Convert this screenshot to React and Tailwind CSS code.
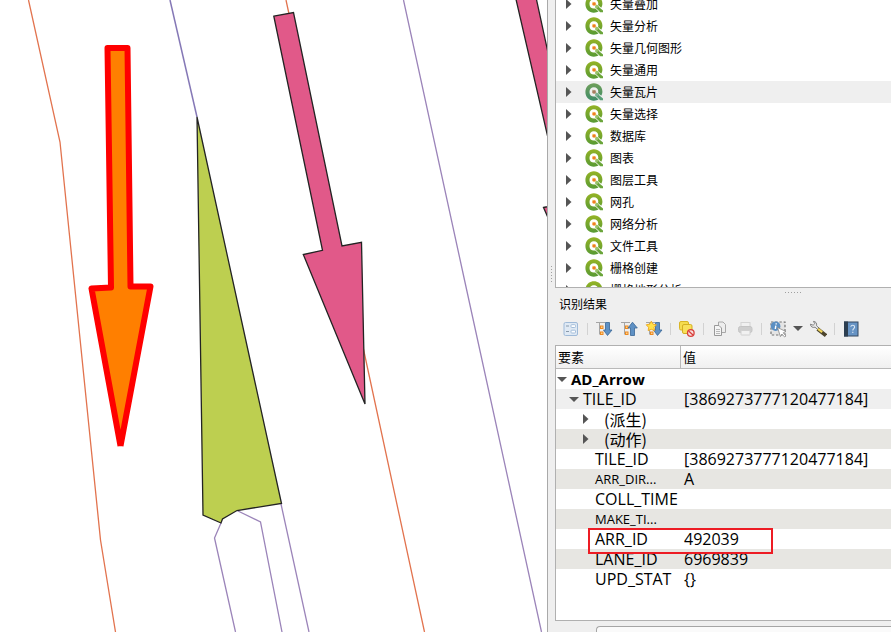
import React from "react";

const TOOLS = [
  "矢量叠加",
  "矢量分析",
  "矢量几何图形",
  "矢量通用",
  "矢量瓦片",
  "矢量选择",
  "数据库",
  "图表",
  "图层工具",
  "网孔",
  "网络分析",
  "文件工具",
  "栅格创建",
  "栅格地形分析",
];

const CJK = "font-['Noto_Sans_CJK_SC',sans-serif]";

function Collapsed() {
  return (
    <svg width="6" height="10" viewBox="0 0 6 10" aria-hidden="true">
      <path d="M0 0L5.5 5L0 10Z" fill="#555" />
    </svg>
  );
}

function Expanded() {
  return (
    <svg width="10" height="5" viewBox="0 0 10 5" aria-hidden="true">
      <path d="M0 0H10L5 5Z" fill="#555" />
    </svg>
  );
}

function QgisLogo({ muted }) {
  return (
    <svg width="18" height="18" viewBox="0 0 18 18" aria-hidden="true">
      <defs>
        <linearGradient id="ring" x1="0" y1="0" x2="0" y2="1">
          <stop offset="0" stopColor="#95b325" />
          <stop offset="1" stopColor="#589a34" />
        </linearGradient>
        <linearGradient id="ringMuted" x1="0" y1="0" x2="0" y2="1">
          <stop offset="0" stopColor="#6f9f5a" />
          <stop offset="1" stopColor="#3f8c68" />
        </linearGradient>
      </defs>
      <path
        fill={muted ? "url(#ringMuted)" : "url(#ring)"}
        d="M8.9 0.3C13.8 0.3 17.4 3.9 17.4 8.6C17.4 10.3 17 11.5 16.2 12.8L13 9.9C13.2 9.4 13.3 9 13.3 8.5C13.3 6 11.4 4.2 8.9 4.2C6.3 4.2 4.5 6 4.5 8.9C4.5 11.7 6.3 13.6 8.9 13.6C9.5 13.6 10 13.5 10.4 13.4L13.6 16.6C12.2 17.3 10.7 17.7 8.9 17.7C4 17.7 0.4 13.9 0.4 9C0.4 4.1 4 0.3 8.9 0.3Z"
      />
      <path d="M11.8 10.2L18 15.4V17.2H15.2L10.2 12.2Z" fill={muted ? "#58a078" : "#6aa53a"} />
      <path d="M10.4 9.6L12.6 9.9L14.2 11.4L11.8 13.6L10.2 12Z" fill={muted ? "#7fb193" : "#9cc26a"} />
      <path d="M7 6.8L10.6 7L11.4 9.8L9.4 11L7 10Z" fill={muted ? "#c5bd9c" : "#fbe3a0"} />
      <circle cx="9.1" cy="8.9" r="1.7" fill={muted ? "#a97b60" : "#ef7d22"} />
    </svg>
  );
}

function Icon({ children }) {
  return (
    <svg width="18" height="18" viewBox="0 0 18 18" aria-hidden="true">
      {children}
    </svg>
  );
}

function TreeLines() {
  return (
    <g>
      <path d="M1 2.5H10M4.5 3V14.5M4.5 7H6M4.5 13H6" stroke="#a5a5a5" fill="none" />
      <rect x="5.500" y="6" width="2.500" height="2.500" fill="#fbd08a" stroke="#ee8a20" />
      <rect x="5.500" y="12" width="2.500" height="2.500" fill="#fbd08a" stroke="#ee8a20" />
    </g>
  );
}

const DOWN = "M10.5 2.5H14.5V10H17L12.5 15.5L8.5 10H10.5Z";
const UP = "M10.5 15.5H14.5V8H17.3L12.5 2.2L8 8H10.5Z";

function ToolButton({ label, children }) {
  return (
    <button type="button" aria-label={label} className="flex h-6 w-[25px] items-center justify-center">
      {children}
    </button>
  );
}

function Separator() {
  return (
    <span className="flex w-2 justify-center">
      <span className="h-3 w-px bg-[#d2d2d2]" />
    </span>
  );
}

function Toolbar() {
  return (
    <div className="flex h-[33px] items-center pl-[3px]">
      <ToolButton label="表单视图">
        <Icon>
          <rect x="2" y="2.5" width="13.5" height="13" rx="1.5" fill="#dfe9f4" stroke="#9fbad8" />
          <path d="M4 6H7M4 11.5H7" stroke="#8899aa" strokeWidth="1.2" />
          <rect x="9" y="4.7" width="4.5" height="2.8" rx="0.8" fill="#fff" stroke="#a3bdd9" />
          <rect x="9" y="10.2" width="4.5" height="2.8" rx="0.8" fill="#fff" stroke="#a3bdd9" />
        </Icon>
      </ToolButton>
      <Separator />
      <ToolButton label="展开树">
        <Icon>
          <TreeLines />
          <path d={DOWN} fill="#5f91c4" stroke="#3a6797" strokeWidth="0.8" />
        </Icon>
      </ToolButton>
      <ToolButton label="折叠树">
        <Icon>
          <TreeLines />
          <path d={UP} fill="#5f91c4" stroke="#3a6797" strokeWidth="0.8" />
        </Icon>
      </ToolButton>
      <ToolButton label="默认展开新结果">
        <Icon>
          <TreeLines />
          <path d={DOWN} fill="#5f91c4" stroke="#3a6797" strokeWidth="0.8" />
          <path
            d="M6.3 1.2L8 4.2L11.4 4.8L9 7.3L9.5 10.6L6.3 9.3L3.2 10.6L3.6 7.3L1.2 4.8L4.6 4.2Z"
            fill="#ffe14a"
            stroke="#eda51b"
            strokeWidth="0.9"
          />
        </Icon>
      </ToolButton>
      <Separator />
      <ToolButton label="清除结果">
        <Icon>
          <rect x="1.5" y="1.5" width="9" height="8.500" rx="1.500" fill="#f5dc4e" stroke="#d9b526" />
          <rect x="4.5" y="4.5" width="9.500" height="9" rx="1.500" fill="#f8e05a" stroke="#d4b021" />
          <circle cx="12.8" cy="13" r="3.3" fill="#f6dedc" stroke="#d9403c" strokeWidth="1.3" />
          <path d="M10.6 11L15 15" stroke="#d9403c" strokeWidth="1.3" />
        </Icon>
      </ToolButton>
      <Separator />
      <ToolButton label="复制">
        <Icon>
          <path d="M7.5 2H12L14.5 4.5V12.5H7.5Z" fill="#ededed" stroke="#a8a8a8" />
          <path d="M3.5 5.5H8L10.5 8V15.5H3.5Z" fill="#f5f5f5" stroke="#999" />
          <path d="M5 9.5H9M5 11.5H9M5 13.5H9" stroke="#aaa" strokeWidth="0.8" />
        </Icon>
      </ToolButton>
      <ToolButton label="打印">
        <Icon>
          <rect x="5" y="2.5" width="9" height="5" fill="#f0f0f0" stroke="#d4d4d4" />
          <rect x="2.5" y="6.5" width="13.5" height="6" rx="2" fill="#cecece" stroke="#c4c4c4" />
          <rect x="5" y="10.5" width="9" height="4.5" rx="0.5" fill="#f1f1f1" stroke="#d0d0d0" />
        </Icon>
      </ToolButton>
      <Separator />
      <ToolButton label="识别要素">
        <Icon>
          <rect x="2" y="2" width="14" height="13" fill="#e4e4e4" stroke="#757575" strokeWidth="1.2" strokeDasharray="2.4 1.8" />
          <circle cx="6.6" cy="6.2" r="4.8" fill="#5c8fc2" />
          <path d="M7.2 3.2V4.4M6.8 5.6L6.3 9" stroke="#fff" strokeWidth="1.4" />
          <path d="M8.5 7.5L17 11.5L14.2 12.8L17 16L15.6 17L12.9 14L11.4 16.6Z" fill="#fff" stroke="#888" strokeWidth="0.8" />
        </Icon>
      </ToolButton>
      <button type="button" aria-label="识别模式" className="flex h-6 w-[15px] items-center justify-center">
        <Expanded />
      </button>
      <ToolButton label="识别设置">
        <Icon>
          <path d="M1.4 4.2C1.6 6.8 3.6 8 6 7.2L8.8 9.6L10.200 8.2L7.6 5.8C8 3.2 6.8 1.4 4.4 1.400L5.8 3.6L4.2 5.2Z" fill="#e8e8e8" stroke="#777" strokeWidth="0.9" />
          <path d="M8.6 9L17 15.6" stroke="#4c442c" strokeWidth="3.6" />
          <path d="M9 8.8L13.2 12.200" stroke="#f0d55b" strokeWidth="2.2" />
        </Icon>
      </ToolButton>
      <Separator />
      <ToolButton label="帮助">
        <svg width="16" height="16" viewBox="0 0 16 16" aria-hidden="true">
          <rect x="1.5" y="1" width="13.5" height="14" fill="#6693c4" stroke="#354960" />
          <rect x="1" y="0.5" width="4" height="15" fill="#2c3e50" />
          <path d="M7.9 5.800C7.900 3.6 11.6 3.700 11.6 5.900C11.6 7.6 9.8 7.500 9.8 9.400M9.8 10.8V12" stroke="#dce8f4" strokeWidth="1.1" fill="none" />
        </svg>
      </ToolButton>
    </div>
  );
}

const FEATURES = [
  { name: "AD_Arrow", value: "", kind: "layer", bg: "bg-white" },
  { name: "TILE_ID", value: "[3869273777120477184]", kind: "feature", bg: "bg-[#efefef]" },
  { name: "(派生)", value: "", kind: "group", bg: "bg-white" },
  { name: "(动作)", value: "", kind: "group", bg: "bg-[#e7e6e2]" },
  { name: "TILE_ID", value: "[3869273777120477184]", kind: "field", bg: "bg-white" },
  { name: "ARR_DIR...", value: "A", kind: "field", small: true, bg: "bg-[#e7e6e2]" },
  { name: "COLL_TIME", value: "", kind: "field", bg: "bg-white" },
  { name: "MAKE_TI...", value: "", kind: "field", small: true, bg: "bg-[#e7e6e2]" },
  { name: "ARR_ID", value: "492039", kind: "field", marked: true, bg: "bg-white" },
  { name: "LANE_ID", value: "6969839", kind: "field", bg: "bg-[#e7e6e2]" },
  { name: "UPD_STAT", value: "{}", kind: "field", bg: "bg-white" },
];

function FeatureName({ row }) {
  if (row.kind === "layer") {
    return (
      <div className="flex items-center gap-1 pl-px">
        <button type="button" aria-label="折叠图层"><Expanded /></button>
        <span className="text-[15px] leading-5 font-bold">{row.name}</span>
      </div>
    );
  }
  if (row.kind === "feature") {
    return (
      <div className="flex items-center gap-1 pl-[13px]">
        <button type="button" aria-label="折叠要素"><Expanded /></button>
        <span>{row.name}</span>
      </div>
    );
  }
  if (row.kind === "group") {
    return (
      <div className="flex items-center gap-[15px] pl-[27px]">
        <button type="button" aria-label="展开"><Collapsed /></button>
        <span className={CJK}>{row.name}</span>
      </div>
    );
  }
  return <div className={row.small ? "pl-[39px] text-[13px] leading-5" : "pl-[39px]"}>{row.name}</div>;
}

function ResultsTable() {
  return (
    <table className="w-full table-fixed border-separate border-spacing-0 text-left text-base leading-5 text-black">
      <colgroup>
        <col className="w-[125px]" />
        <col />
      </colgroup>
      <thead>
        <tr className={`h-[23px] bg-linear-to-b from-white to-[#efefef] text-[13px] ${CJK}`}>
          <th className="border-r border-b border-[#b9b9b9] p-0 pl-0.5 font-normal">要素</th>
          <th className="border-b border-[#b9b9b9] p-0 pl-0.5 font-normal">值</th>
        </tr>
      </thead>
      <tbody>
        {FEATURES.map((row, i) => (
          <tr key={i} className={`h-5 ${row.bg}`}>
            <td className="relative p-0 whitespace-nowrap">
              <FeatureName row={row} />
              {row.marked && (
                <span className="pointer-events-none absolute -top-px left-8 z-10 h-[26px] w-[185px] border-2 border-[#ed1c24]" />
              )}
            </td>
            <td className="p-0 pl-[3px] whitespace-nowrap">{row.value}</td>
          </tr>
        ))}
      </tbody>
    </table>
  );
}

function MapCanvas() {
  return (
    <main className="min-w-0 flex-1 overflow-hidden border-r border-[#a9a9a9] bg-white">
      <svg className="block h-full w-full" role="img" aria-label="地图">
        <g fill="none" stroke="#e2734e" strokeWidth="1.3">
          <path d="M28.5 0L60 142L100.5 540L115.5 632" />
          <path d="M286 0L289 14M363 347L424.5 632" />
        </g>
        <g fill="none" stroke="#9b84b9" strokeWidth="1.3">
          <path d="M281 504L309 632" />
          <path d="M403.5 0L464.5 280L541.5 632" />
          <path d="M221 523L214.5 538L235.5 632" />
          <path d="M238 511L260.5 522L282 632" />
        </g>
        <path d="M170 0L197 117" stroke="#8578b6" strokeWidth="1.5" />
        <path d="M197 117L281.5 503.5L237 510.5L222.5 519L221 523L203 515Z" fill="#bdcf50" stroke="#232323" strokeWidth="1.3" />
        <g fill="#e15989" stroke="#232323" strokeWidth="1.3">
          <path d="M273.8 16.2L293.5 12.5L342 246L361.5 242.3L365 404L303.3 254.5L322.5 250.3Z" />
          <path d="M515 -5L535.5 -5L560 108L560 190Z" />
          <path d="M543.5 207.5L560 204V245Z" />
        </g>
        <path
          d="M120.5 446L91.5 288.5L111 287.500L107.5 48L127.5 48L130.5 286.5L150.5 286.5L120.5 446"
          fill="#ff7f00"
          stroke="#f00"
          strokeWidth="6"
          strokeLinejoin="round"
        />
      </svg>
    </main>
  );
}

const DOTS = [0, 1, 2, 3, 4, 5];

export default function App() {
  return (
    <div className="flex h-screen overflow-hidden bg-[#efefef] font-['Open_Sans','Noto_Sans_CJK_SC',sans-serif]">
      <MapCanvas />
      <div className="flex w-[7px] shrink-0 flex-col items-center gap-0.5 pt-[266px]">
        {DOTS.map((d) => (
          <span key={d} className="h-px w-px bg-[#a0a0a0]" />
        ))}
      </div>
      <aside className="flex w-[336px] shrink-0 flex-col">
        <section className="h-72 shrink-0 overflow-hidden border-b border-l border-[#b0b0b0] bg-white">
          <ul className={`-mt-[7px] text-xs text-black ${CJK}`}>
            {TOOLS.map((tool) => (
              <li key={tool} className={`flex h-[22px] items-center pl-[10px] ${tool === "矢量瓦片" ? "bg-[#efefef]" : ""}`}>
                <button type="button" aria-label={`展开${tool}`} className="mr-[13px]">
                  <Collapsed />
                </button>
                <QgisLogo muted={tool === "矢量瓦片"} />
                <span className="ml-[7px]">{tool}</span>
              </li>
            ))}
          </ul>
        </section>
        <div className="flex h-2 shrink-0 items-center justify-end gap-0.5 pr-[90px]">
          {DOTS.map((d) => (
            <span key={d} className="h-px w-px bg-[#a0a0a0]" />
          ))}
        </div>
        <h2 className={`pl-1 text-xs leading-4 text-black ${CJK}`}>识别结果</h2>
        <Toolbar />
        <section className="min-h-0 flex-1 overflow-hidden border-y border-l border-[#b0b0b0] bg-white">
          <ResultsTable />
        </section>
        <div className="flex h-[11px] shrink-0 items-end">
          <label htmlFor="mode" className="sr-only">模式</label>
          <select id="mode" className="ml-[41px] h-1.5 flex-1 appearance-none rounded-tl border-t border-l border-[#a5a5a5] bg-[#fafafa]" />
        </div>
      </aside>
    </div>
  );
}
